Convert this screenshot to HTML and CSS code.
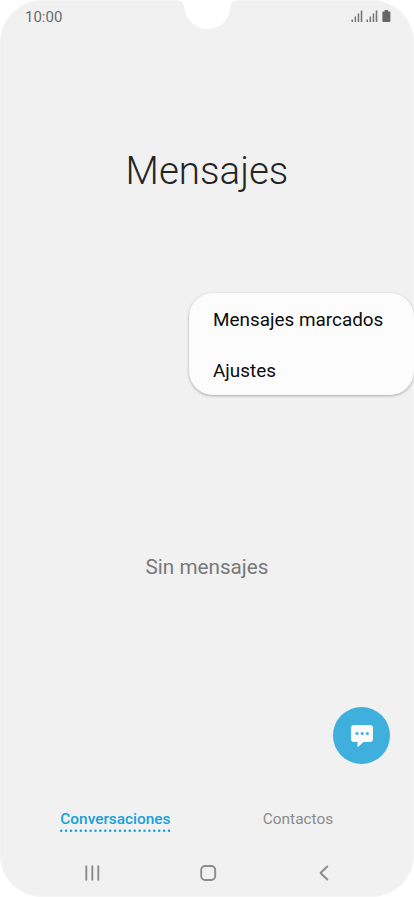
FILE: index.html
```html
<!DOCTYPE html>
<html lang="es">
<head>
<meta charset="utf-8">
<title>Mensajes</title>
<link rel="stylesheet" href="styles.css">
</head>
<body>
<div class="screen">
  <svg class="notch" width="64" height="31" viewBox="0 0 64 31"><path d="M0 0C7 0 9 3 9.500 8C11 21 20 29 32.500 29S53.500 21 55 9C55.500 3 58 0 64 0Z" fill="#fff"/></svg>
  <header class="status">
    <span class="time">10:00</span>
    <svg class="signals" width="40" height="13" viewBox="0 0 40 13" fill="#757575">
      <path d="M.5 9.500h1.500v2.500H.5zM3.600 6.500h1.500v5.500H3.600zM6.700 3.500h1.500v8.500H6.700zM9.700.4h1.600V12H9.700z"/>
      <path d="M15.500 9.500h1.500v2.500h-1.500zM18.600 6.500h1.500v5.500h-1.500zM21.700 3.500h1.500v8.500h-1.500zM24.700.4h1.600V12h-1.600z"/>
      <path d="M33.600 0h3.500v1.500h1.300q1 0 1 1V11q0 1-1 1h-6q-1 0-1-1V2.500q0-1 1-1h1.200z" fill="#666"/>
    </svg>
  </header>
  <h1 class="title">Mensajes</h1>
  <nav class="menu">
    <span class="menu-item">Mensajes marcados</span>
    <span class="menu-item">Ajustes</span>
  </nav>
  <p class="empty">Sin mensajes</p>
  <button class="compose" aria-label="Nuevo mensaje">
    <svg width="24" height="24" viewBox="0 0 24 24"><path d="M4 1H20Q23 1 23 4V15Q23 18 20 18H13.500L8.500 22.500Q7.500 23.200 7.500 22V18H4Q1 18 1 15V4Q1 1 4 1Z" fill="#fafafa"/><g fill="#3fb0dd"><circle cx="7" cy="9.500" r="1.550"/><circle cx="12.200" cy="9.500" r="1.550"/><circle cx="17.400" cy="9.500" r="1.550"/></g></svg>
  </button>
  <div class="tabs">
    <div class="tab active"><span>Conversaciones</span>
      <svg width="112" height="4" viewBox="0 0 112 4"><path d="M1.200 1.700H110" stroke="#16a0d8" stroke-width="2.500" stroke-linecap="round" stroke-dasharray="0 4.900"/></svg>
    </div>
    <div class="tab"><span>Contactos</span></div>
  </div>
  <footer class="nav">
    <svg width="16" height="16" viewBox="0 0 16 16"><path d="M2.300 1.200V14.800M8.300 1.200V14.800M14.300 1.200V14.800"/></svg>
    <svg width="18" height="18" viewBox="0 0 18 18"><rect x="1.200" y="2" width="14" height="14" rx="4"/></svg>
    <svg width="12" height="18" viewBox="0 0 12 18"><path d="M9.300 2.500L2.500 9L9.300 15.500"/></svg>
  </footer>
</div>
</body>
</html>
```
FILE: styles.css
```css
* { box-sizing: border-box; }
body { margin: 0; background: #fff; font-family: Roboto, "Liberation Sans", sans-serif; }
.screen {
  position: relative;
  display: flex;
  flex-direction: column;
  width: 414px;
  height: 897px;
  padding: 1px 0 0;
  background: #f1f1f1;
  box-shadow: inset 0 0 0 1px #f5f5f5;
  border-radius: 42px;
  overflow: hidden;
}
.notch { position: absolute; top: 0; left: 175px; }
.status {
  display: flex;
  justify-content: space-between;
  align-items: center;
  height: 31px;
  padding: 0 23.500px 0 25px;
}
.time { font-size: 15px; line-height: 18px; color: #6b6b6b; }
.title {
  margin: 115px 0 0;
  height: 49px;
  font-size: 38.500px;
  line-height: 48px;
  font-weight: 300;
  text-align: center;
  color: #252525;
}
.menu {
  display: flex;
  flex-direction: column;
  align-self: flex-end;
  width: 225px;
  height: 102px;
  margin-top: 97px;
  padding-left: 24px;
  background: #fcfcfc;
  border-radius: 24px;
  box-shadow: 0 1px 3px rgba(0, 0, 0, .3);
}
.menu-item { height: 51px; font-size: 18.900px; line-height: 53px; color: #0c0c0c; }
.empty {
  margin: 159px 0 0;
  height: 26px;
  font-size: 20.700px;
  line-height: 26px;
  text-align: center;
  color: #797979;
}
.compose {
  display: flex;
  align-items: center;
  justify-content: center;
  align-self: flex-end;
  width: 57px;
  height: 57px;
  margin: 127px 24px 0 0;
  padding: 0;
  border: 0;
  border-radius: 50%;
  background: #3fb0dd;
}
.tabs { display: flex; height: 26px; margin-top: 45px; padding-left: 60.300px; font-size: 15.400px; line-height: 20px; color: #8a8a8a; }
.tab { display: flex; flex-direction: column; }
.tab.active { width: 202.500px; font-weight: 500; color: #16a0d8; }
.nav { display: flex; align-items: center; justify-content: space-between; height: 24px; margin: 26px 84px 0; }
.nav svg { fill: none; stroke: #8b8b8b; stroke-width: 1.900; stroke-linecap: round; stroke-linejoin: round; }
```
